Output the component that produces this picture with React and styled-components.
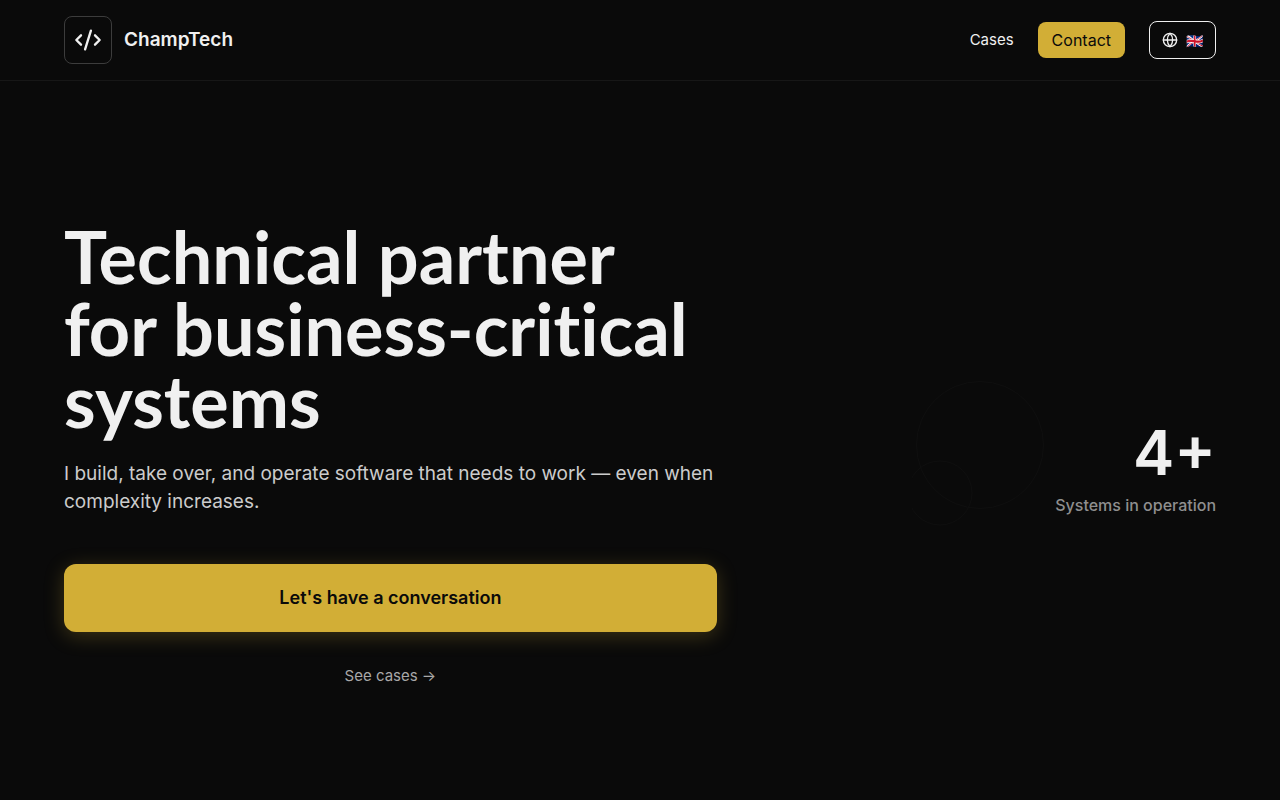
import React from "react";
import styled, { createGlobalStyle } from "styled-components";
import { CodeXml, Globe } from "lucide-react";

const GlobalStyle = createGlobalStyle`
  * {
    box-sizing: border-box;
  }

  body {
    margin: 0;
    background: #0a0a0a;
    color: #f0f0f0;
    font-family: Inter, "Liberation Sans", sans-serif;
  }
`;

const Page = styled.div`
  min-height: 100vh;
  display: flex;
  flex-direction: column;
`;

const Header = styled.header`
  display: flex;
  align-items: center;
  justify-content: space-between;
  padding: 16px 64px;
  border-bottom: 1px solid #171717;
`;

const Brand = styled.a`
  display: flex;
  align-items: center;
  gap: 12px;
  color: #f0f0f0;
  font-size: 19px;
  line-height: 28px;
  font-weight: 600;
  text-decoration: none;
`;

const LogoBox = styled.span`
  display: flex;
  align-items: center;
  justify-content: center;
  width: 48px;
  height: 48px;
  border: 1px solid #3c3c3c;
  border-radius: 8px;
`;

const Nav = styled.nav`
  display: flex;
  align-items: center;
  gap: 24px;
`;

const NavLink = styled.a`
  color: #f0f0f0;
  font-size: 15px;
  line-height: 24px;
  text-decoration: none;
`;

const ContactLink = styled(NavLink)`
  padding: 6px 14px;
  border-radius: 8px;
  background: #d2ae36;
  color: #0a0a0a;
  font-size: 16px;
`;

const LanguageButton = styled.button`
  display: flex;
  align-items: center;
  gap: 8px;
  height: 38px;
  padding: 0 12px;
  border: 1px solid #f0f0f0;
  border-radius: 8px;
  background: transparent;
  color: #f0f0f0;
  font-family: inherit;
  font-size: 14px;
  cursor: pointer;
`;

const Hero = styled.main`
  flex: 1;
  display: grid;
  grid-template-columns: 3fr 2fr;
  gap: 64px;
  align-items: center;
  padding: 120px 64px 60px;
`;

const Title = styled.h1`
  margin: 0 0 24px;
  font-family: Lato, Inter, sans-serif;
  font-size: 72px;
  line-height: 72px;
  font-weight: 700;
  font-variant-ligatures: none;
`;

const Lead = styled.p`
  margin: 0 0 48px;
  color: #cccccc;
  font-size: 19px;
  line-height: 28px;
`;

const Actions = styled.div`
  display: flex;
  flex-direction: column;
  align-items: center;
  gap: 20px;
  padding-bottom: 22px;
`;

const PrimaryLink = styled.a`
  width: 100%;
  padding: 20px;
  border-radius: 12px;
  background: #d2ae36;
  box-shadow: 0 4px 20px rgba(210, 174, 54, 0.25);
  color: #0a0a0a;
  font-size: 18px;
  line-height: 28px;
  font-weight: 600;
  text-align: center;
  text-decoration: none;
`;

const SecondaryLink = styled(NavLink)`
  padding: 12px 0;
  color: #a8a8a8;
`;

const Aside = styled.aside`
  position: relative;
  padding-bottom: 4px;
  text-align: right;
`;

// Faint rings behind the figures
const Rings = styled.svg`
  position: absolute;
  top: -42px;
  right: 168px;
  width: 136px;
  height: 150px;
  pointer-events: none;
`;

const StatValue = styled.div`
  margin-bottom: 8px;
  font-size: 62px;
  line-height: 64px;
  font-weight: 600;
`;

const StatLabel = styled.div`
  color: #8f8f8f;
  font-size: 16px;
  line-height: 24px;
  font-weight: 500;
`;

const App = () => (
  <Page>
    <GlobalStyle />
    <Header>
      <Brand href="#">
        <LogoBox>
          <CodeXml size={28} />
        </LogoBox>
        ChampTech
      </Brand>
      <Nav>
        <NavLink href="#cases">Cases</NavLink>
        <ContactLink href="#contact">Contact</ContactLink>
        <LanguageButton type="button" aria-label="Change language">
          <Globe size={16} />
          <span>🇬🇧</span>
        </LanguageButton>
      </Nav>
    </Header>
    <Hero>
      <section>
        <Title>
          Technical partner
          <br />
          for business-critical
          <br />
          systems
        </Title>
        <Lead>
          I build, take over, and operate software that needs to work — even
          when complexity increases.
        </Lead>
        <Actions>
          <PrimaryLink href="#contact">Let's have a conversation</PrimaryLink>
          <SecondaryLink href="#cases">See cases →</SecondaryLink>
        </Actions>
      </section>
      <Aside>
        <Rings viewBox="0 0 136 150" fill="none" stroke="#0f0f0f" aria-hidden="true">
          <circle cx="68" cy="66" r="63.5" />
          <circle cx="28" cy="114" r="32" />
        </Rings>
        <StatValue>4+</StatValue>
        <StatLabel>Systems in operation</StatLabel>
      </Aside>
    </Hero>
  </Page>
);

export default App;
